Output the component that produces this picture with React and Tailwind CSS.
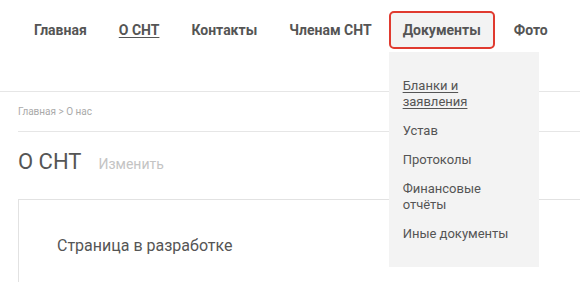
const nav = ['Главная', 'О СНТ', 'Контакты', 'Членам СНТ', 'Документы', 'Фото']

const docs = [
  ['Бланки и', 'заявления'],
  ['Устав'],
  ['Протоколы'],
  ['Финансовые', 'отчёты'],
  ['Иные документы'],
]

export default function App() {
  return (
    <div className="w-[580px] h-[282px] overflow-hidden bg-white relative font-['Roboto',sans-serif] text-[#555]">
      <header className="h-[92px] border-b border-[#e6e6e6] pl-[18px] pt-[11px]">
        <ul className="flex">
          {nav.map((item) => {
            const active = item === 'Документы'
            return (
              <li key={item} className="relative">
                {active ? (
                  <>
                    <div className="h-[38px] ml-px mr-[3px] px-3 flex items-center border-2 border-[#e03a2f] rounded-[5px] bg-[#f3f3f3] text-[14px] font-bold">
                      {item}
                    </div>
                    <div className="absolute z-10 left-px top-[41px] w-[150px] h-[215px] bg-[#f3f3f3] pl-[14px] pt-[26px]">
                      <ul className="flex flex-col gap-[13px] text-[13px] leading-[16px]">
                        {docs.map((d, i) => (
                          <li key={i} className={i === 0 ? 'underline underline-offset-2' : ''}>
                            {d.map((line, j) => (
                              <div key={j}>{line}</div>
                            ))}
                          </li>
                        ))}
                      </ul>
                    </div>
                  </>
                ) : (
                  <div
                    className={`h-[38px] px-4 flex items-center text-[14px] font-bold ${
                      item === 'О СНТ' ? 'underline underline-offset-2' : ''
                    }`}
                  >
                    {item}
                  </div>
                )}
              </li>
            )
          })}
        </ul>
      </header>

      <div className="ml-[18px] h-[40px] border-b border-[#e6e6e6] flex items-center text-[10px] text-[#aaa]">
        Главная &gt; О нас
      </div>

      <div className="ml-[18px] mt-[17px] flex items-baseline gap-[17px]">
        <h1 className="text-[22px] leading-[26px] text-[#555]">О СНТ</h1>
        <span className="text-[14px] text-[#c4c4c4]">Изменить</span>
      </div>

      <div className="ml-[18px] mt-[24px] w-[620px] h-[120px] border-l border-t border-[#e2e2e2] pl-[38px] pt-[36px]">
        <p className="text-[16px] leading-[20px]">Страница в разработке</p>
      </div>
    </div>
  )
}
